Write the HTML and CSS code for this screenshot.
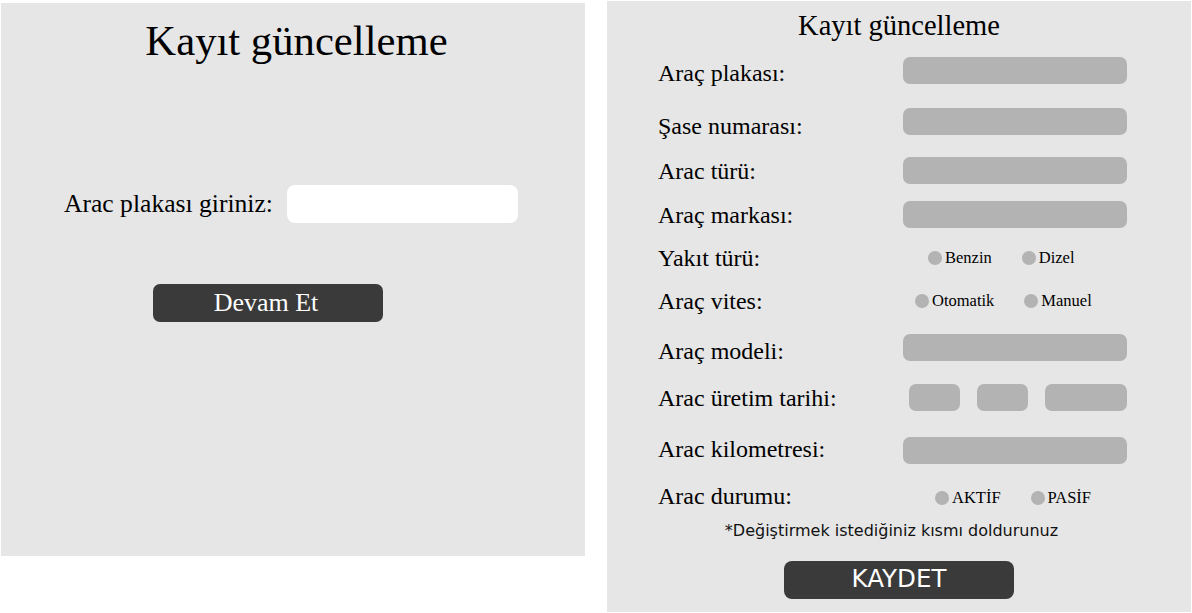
FILE: index.html
```html
<!DOCTYPE html>
<html lang="tr">
<head>
<meta charset="utf-8">
<title>Kayıt güncelleme</title>
<link rel="stylesheet" href="styles.css">
</head>
<body>
<div class="page">
  <section class="panel panel-left">
    <h1 class="title-lg">Kayıt güncelleme</h1>
    <div class="plate-row">
      <span class="plate-label">Arac plakası giriniz:</span>
      <span class="plate-input"></span>
    </div>
    <div class="btn btn-continue">Devam Et</div>
  </section>

  <section class="panel panel-right">
    <h2 class="title-sm">Kayıt güncelleme</h2>
    <div class="form">
      <div class="row"><span class="lbl">Araç plakası:</span><span class="field"></span></div>
      <div class="row"><span class="lbl">Şase numarası:</span><span class="field"></span></div>
      <div class="row"><span class="lbl">Arac türü:</span><span class="field"></span></div>
      <div class="row"><span class="lbl">Araç markası:</span><span class="field"></span></div>
      <div class="row"><span class="lbl">Yakıt türü:</span>
        <span class="radios radios-fuel">
          <span class="radio"><span class="dot"></span>Benzin</span>
          <span class="radio"><span class="dot"></span>Dizel</span>
        </span>
      </div>
      <div class="row"><span class="lbl">Araç vites:</span>
        <span class="radios radios-gear">
          <span class="radio"><span class="dot"></span>Otomatik</span>
          <span class="radio"><span class="dot"></span>Manuel</span>
        </span>
      </div>
      <div class="row"><span class="lbl">Araç modeli:</span><span class="field"></span></div>
      <div class="row"><span class="lbl">Arac üretim tarihi:</span>
        <span class="date">
          <span class="box box-day"></span>
          <span class="box box-month"></span>
          <span class="box box-year"></span>
        </span>
      </div>
      <div class="row"><span class="lbl">Arac kilometresi:</span><span class="field"></span></div>
      <div class="row"><span class="lbl">Arac durumu:</span>
        <span class="radios radios-state">
          <span class="radio"><span class="dot"></span>AKTİF</span>
          <span class="radio"><span class="dot"></span>PASİF</span>
        </span>
      </div>
    </div>
    <p class="note">*Değiştirmek istediğiniz kısmı doldurunuz</p>
    <div class="btn btn-save">KAYDET</div>
  </section>
</div>
</body>
</html>
```

FILE: styles.css
```css
* {
  box-sizing: border-box;
}

html, body {
  margin: 0;
  padding: 0;
  background: #ffffff;
}

body {
  font-family: "Liberation Serif", "Times New Roman", serif;
  color: #000;
}

.page {
  display: flex;
  align-items: flex-start;
  gap: 22px;
  padding-left: 1px;
}

.panel {
  background: #e6e6e6;
  display: flex;
  flex-direction: column;
}

/* ---------- left panel ---------- */
.panel-left {
  width: 584px;
  height: 553px;
  margin-top: 3px;
  padding-top: 17px;
}

.title-lg {
  margin: 0;
  font-weight: normal;
  font-size: 42.7px;
  line-height: 42px;
  text-align: center;
  padding-left: 7px;
}

.plate-row {
  display: flex;
  align-items: center;
  height: 38px;
  margin-top: 123px;
  padding-left: 63px;
  gap: 14px;
}

.plate-label {
  font-size: 25.6px;
  line-height: 26px;
  white-space: nowrap;
}

.plate-input {
  width: 231px;
  height: 38px;
  background: #ffffff;
  border-radius: 8px;
}

.btn {
  width: 230px;
  height: 38px;
  background: #3a3a3a;
  color: #ffffff;
  border-radius: 7px;
  display: flex;
  align-items: center;
  justify-content: center;
}

.btn-continue {
  margin-top: 61px;
  margin-left: 152px;
  font-size: 26px;
  padding-right: 4px;
}

/* ---------- right panel ---------- */
.panel-right {
  width: 584px;
  height: 611px;
  margin-top: 1px;
  padding-top: 10px;
}

.title-sm {
  margin: 0;
  font-weight: normal;
  font-size: 28.5px;
  line-height: 29px;
  text-align: center;
}

.form {
  display: flex;
  flex-direction: column;
}

.row {
  display: grid;
  grid-template-columns: 296px 224px;
  align-items: center;
  height: 27px;
}

.lbl {
  padding-left: 51px;
  font-size: 24px;
  line-height: 24px;
  white-space: nowrap;
}

.field {
  height: 27px;
  background: #b3b3b3;
  border-radius: 7px;
}

.row:nth-child(1)  { margin-top: 15px; }
.row:nth-child(2)  { margin-top: 23px; }
.row:nth-child(3)  { margin-top: 25px; }
.row:nth-child(4)  { margin-top: 17px; }
.row:nth-child(5)  { margin-top: 16px; }
.row:nth-child(6)  { margin-top: 16px; }
.row:nth-child(7)  { margin-top: 18px; }
.row:nth-child(8)  { margin-top: 25px; }
.row:nth-child(9)  { margin-top: 26px; }
.row:nth-child(10) { margin-top: 20px; }

/* label nudges (the mock-up labels sit a little off their fields) */
.row:nth-child(1) .lbl { margin-top: 6px; }
.row:nth-child(2) .lbl { margin-top: 9px; }
.row:nth-child(7) .lbl { margin-top: 7px; }
.row:nth-child(9) .lbl,
.row:nth-child(10) .lbl { margin-bottom: 3px; }

.radios {
  display: flex;
  align-items: center;
  gap: 30px;
  font-size: 16.5px;
  line-height: 18px;
  white-space: nowrap;
}

.radios-fuel  { padding-left: 25px; }
.radios-gear  { padding-left: 12px; }
.radios-state { padding-left: 32px; }

.radio {
  display: flex;
  align-items: center;
  gap: 3px;
}

.dot {
  width: 14px;
  height: 14px;
  border-radius: 50%;
  background: #b3b3b3;
  flex: none;
}

.date {
  display: flex;
  gap: 17px;
  padding-left: 6px;
}

.box {
  height: 27px;
  background: #b3b3b3;
  border-radius: 7px;
}

.box-day,
.box-month { width: 52px; }
.box-year  { width: 83px; }

.note {
  margin: 10px 0 0;
  padding-right: 15px;
  font-family: "DejaVu Sans", Verdana, sans-serif;
  font-size: 16px;
  line-height: 19px;
  text-align: center;
  color: #111;
}

.btn-save {
  margin: 21px auto 0;
  border-radius: 8px;
  font-family: "DejaVu Sans", Verdana, sans-serif;
  font-size: 24.5px;
  padding-bottom: 3px;
}
```
